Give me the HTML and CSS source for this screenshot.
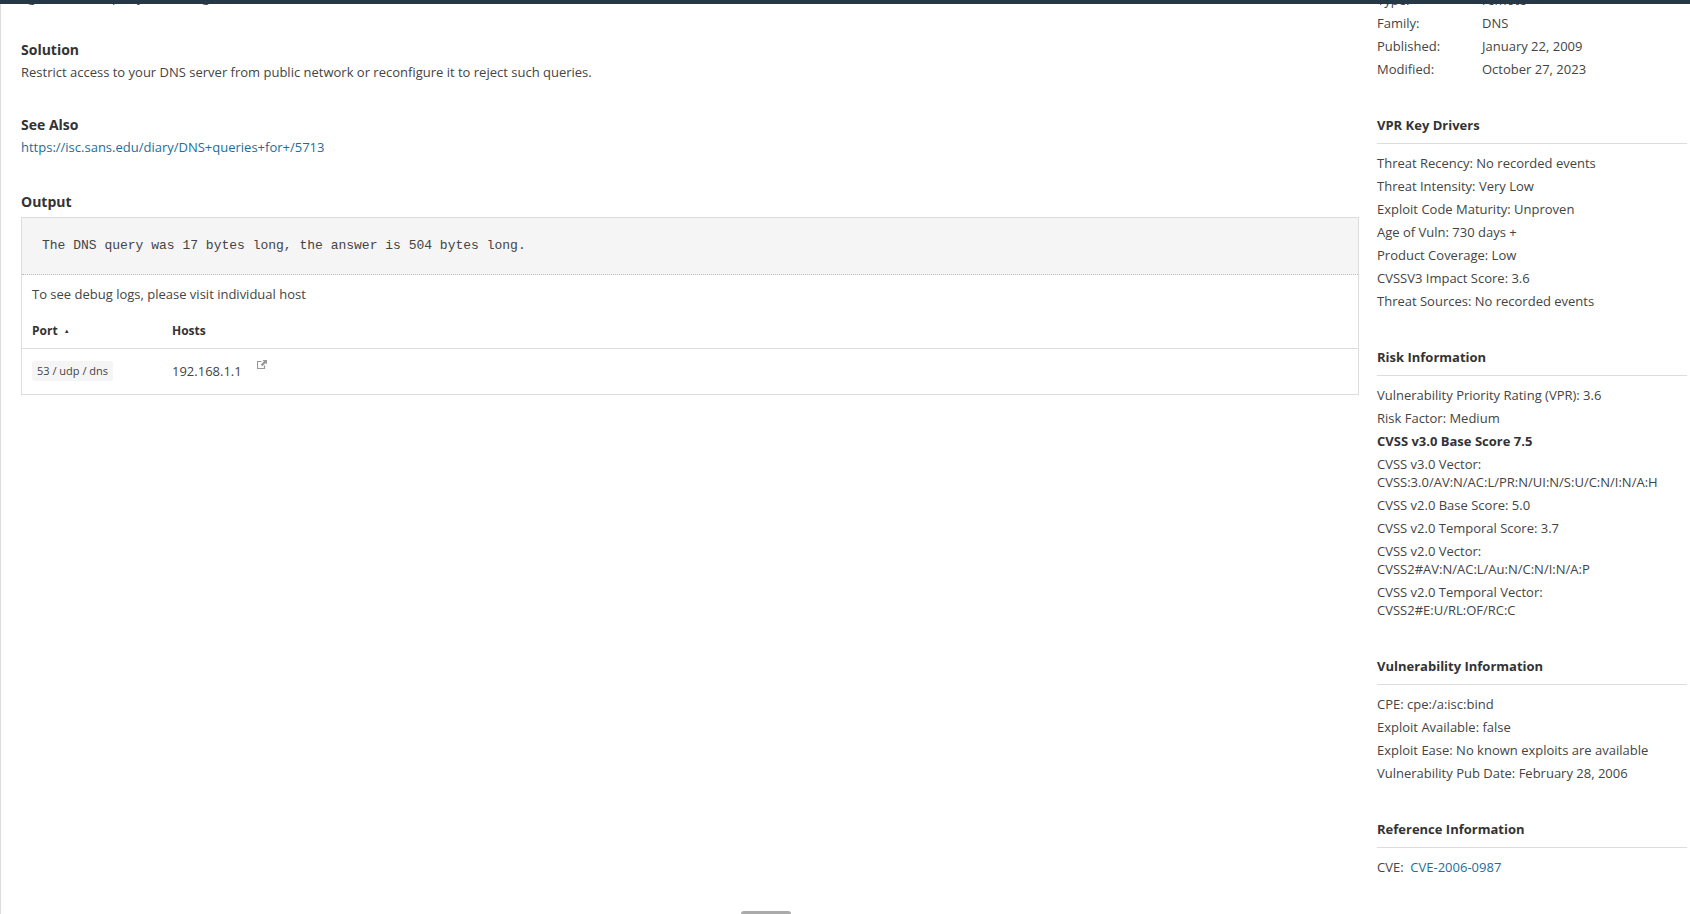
FILE: index.html
```html
<!DOCTYPE html>
<html lang="en">
<head>
<meta charset="utf-8">
<title>Plugin details</title>
<link rel="stylesheet" href="styles.css">
</head>
<body>
<div class="topbar"></div>
<div class="page">
  <main class="main">
    <p class="clipped">against a third-party host using the remote DNS server.</p>
    <section class="block first">
      <h3>Solution</h3>
      <p>Restrict access to your DNS server from public network or reconfigure it to reject such queries.</p>
    </section>
    <section class="block">
      <h3>See Also</h3>
      <p><a href="#">https://isc.sans.edu/diary/DNS+queries+for+/5713</a></p>
    </section>
    <section class="block output-block">
      <h3>Output</h3>
      <div class="output">
        <pre class="code">The DNS query was 17 bytes long, the answer is 504 bytes long.</pre>
        <p class="debug">To see debug logs, please visit individual host</p>
        <div class="row head">
          <div class="port">Port <span class="sort">▲</span></div>
          <div class="hosts">Hosts</div>
        </div>
        <div class="row body-row">
          <div class="port"><span class="tag">53 / udp / dns</span></div>
          <div class="hosts">192.168.1.1
            <svg class="ext" viewBox="0 0 10 10" width="10" height="10" aria-hidden="true">
              <path d="M7.5 5.5v3h-7v-7h4" fill="none" stroke="#999" stroke-width="1.2"/>
              <path d="M5.5 0h4.5v4.5L8.6 3.1 5.4 6.3 3.7 4.6l3.2-3.2z" fill="#999"/>
            </svg>
          </div>
        </div>
      </div>
    </section>
  </main>
  <aside class="side">
    <dl class="meta">
      <div><dt>Type:</dt><dd>remote</dd></div>
      <div><dt>Family:</dt><dd>DNS</dd></div>
      <div><dt>Published:</dt><dd>January 22, 2009</dd></div>
      <div><dt>Modified:</dt><dd>October 27, 2023</dd></div>
    </dl>
    <section class="group">
      <h4>VPR Key Drivers</h4>
      <p>Threat Recency: No recorded events</p>
      <p>Threat Intensity: Very Low</p>
      <p>Exploit Code Maturity: Unproven</p>
      <p>Age of Vuln: 730 days +</p>
      <p>Product Coverage: Low</p>
      <p>CVSSV3 Impact Score: 3.6</p>
      <p>Threat Sources: No recorded events</p>
    </section>
    <section class="group">
      <h4>Risk Information</h4>
      <p>Vulnerability Priority Rating (VPR): 3.6</p>
      <p>Risk Factor: Medium</p>
      <p class="strong">CVSS v3.0 Base Score 7.5</p>
      <p>CVSS v3.0 Vector:<br>CVSS:3.0/AV:N/AC:L/PR:N/UI:N/S:U/C:N/I:N/A:H</p>
      <p>CVSS v2.0 Base Score: 5.0</p>
      <p>CVSS v2.0 Temporal Score: 3.7</p>
      <p>CVSS v2.0 Vector:<br>CVSS2#AV:N/AC:L/Au:N/C:N/I:N/A:P</p>
      <p>CVSS v2.0 Temporal Vector:<br>CVSS2#E:U/RL:OF/RC:C</p>
    </section>
    <section class="group">
      <h4>Vulnerability Information</h4>
      <p>CPE: cpe:/a:isc:bind</p>
      <p>Exploit Available: false</p>
      <p>Exploit Ease: No known exploits are available</p>
      <p>Vulnerability Pub Date: February 28, 2006</p>
    </section>
    <section class="group">
      <h4>Reference Information</h4>
      <p>CVE:&nbsp; <a href="#">CVE-2006-0987</a></p>
    </section>
  </aside>
</div>
<div class="handle"></div>
</body>
</html>
```
FILE: styles.css
```css
* { box-sizing: border-box; }
html, body { margin: 0; height: 100%; overflow: hidden; background: #fff; }
body { font-family: "Open Sans", sans-serif; font-size: 13px; color: #444; position: relative; }
p, h3, h4, dl, dd, pre { margin: 0; }
a { color: #1c6e99; text-decoration: none; }

.topbar { position: absolute; top: 0; left: 0; right: 0; height: 4px; background: #263845; z-index: 2; }
.page { display: flex; height: 914px; border-left: 1px solid #ddd; padding: 0 3px 0 20px; gap: 18px; overflow: hidden; }
.main { width: 1338px; flex: none; }
.side { flex: 1; min-width: 0; margin-top: -11px; }

.clipped { margin-top: -12px; line-height: 18px; }
.block { margin-top: 34px; }
.block.first { margin-top: 34px; }
.block h3 { font-size: 14px; font-weight: 700; color: #333; line-height: 20px; margin-bottom: 3px; }
.block p { line-height: 18px; }
.output-block { margin-top: 36px; }

.output { border: 1px solid #ddd; margin-top: 5px; }
.code { background: #f5f5f5; border-bottom: 1px dotted #bbb; font-family: "Liberation Mono", monospace; font-size: 13px; line-height: 14px; height: 57px; padding: 21px 20px; color: #444; }
.block .debug { padding: 10px 10px 0; line-height: 18px; }
.row { display: flex; padding: 0 10px; }
.head { height: 37px; margin-top: 9px; align-items: center; font-weight: 700; font-size: 12px; color: #333; border-bottom: 1px solid #ddd; }
.body-row { height: 45px; padding-bottom: 2px; align-items: center; }
.port { width: 140px; flex: none; }
.sort { font-size: 6px; vertical-align: middle; margin-left: 3px; }
.tag { display: inline-block; background: #f5f5f5; border-radius: 3px; font-size: 11px; line-height: 20px; padding: 0 5px; }
.body-row .hosts { padding-bottom: 1px; }
.ext { margin-left: 12px; vertical-align: 6px; }

.meta { margin-bottom: -3px; }
.meta div { display: flex; line-height: 23px; }
.meta dt { width: 105px; flex: none; }
.group { margin-top: 37px; }
.group h4 { font-size: 13px; font-weight: 700; color: #333; line-height: 20px; padding-bottom: 8px; border-bottom: 1px solid #ddd; margin-bottom: 10px; }
.group p { line-height: 18px; margin-bottom: 5px; }
.group .strong { font-weight: 700; color: #333; }

.handle { position: absolute; left: 741px; bottom: 0; width: 50px; height: 3px; background: #aaa; border-radius: 3px 3px 0 0; }
```
